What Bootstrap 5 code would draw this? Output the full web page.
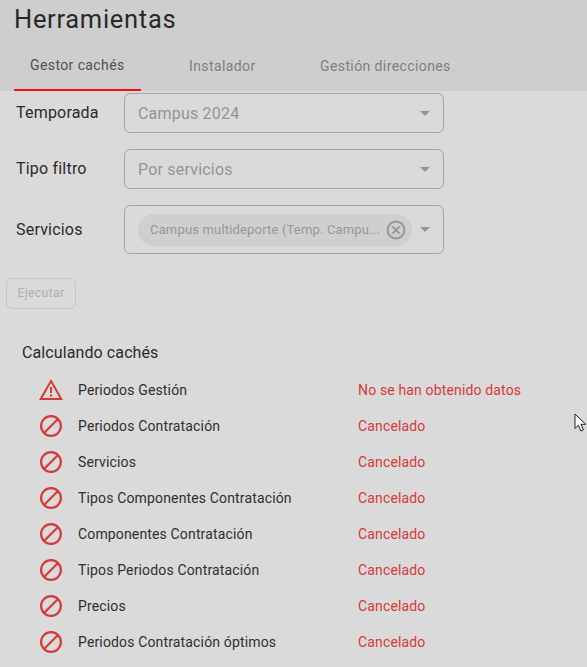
<!DOCTYPE html>
<html lang="es">
<head>
<meta charset="utf-8">
<title>Herramientas</title>
<link href="https://cdn.jsdelivr.net/npm/bootstrap@5.3.0/dist/css/bootstrap.min.css" rel="stylesheet">
<style>
html,body{height:100%;}
body{background:#dadada;font-family:Roboto,"Liberation Sans",sans-serif;color:#212121;overflow:hidden;position:relative;}
.hdr{background:#cecece;height:91px;}
.hdr-title{font-size:25.5px;font-weight:400;line-height:30px;letter-spacing:.7px;padding:4px 0 0 14px;margin:0;height:48px;color:#292929;}
.tabbar{height:43px;padding-left:14px;}
.tabitem{flex:none;white-space:nowrap;font-size:14px;letter-spacing:.4px;color:#7f7f7f;line-height:16px;height:43px;padding:10px 0 0 48px;}
.tabitem.on{color:#505050;border-bottom:2px solid #f01010;width:127px;padding:9px 0 0 16px;}
.tab2{width:131px;}
.formarea{padding:2px 0 0 16px;}
.frow{width:428px;}
.flabel{width:108px;font-size:16px;color:#2b2b2b;letter-spacing:.2px;}
.fbox{width:320px;height:40px;border:1px solid #a5a5a5;border-radius:6px;padding:1px 13px 0;color:#949494;font-size:16px;letter-spacing:.2px;}
.fbox.tall{height:49px;padding:0 13px;}
.caret{width:0;height:0;border-left:5px solid transparent;border-right:5px solid transparent;border-top:5px solid #969696;}
.chip{width:274px;height:32px;background:#cfcfcf;border-radius:16px;padding:0 6px 0 12px;font-size:13px;color:#979797;letter-spacing:.17px;}
.chip span{white-space:nowrap;}
.runbtn{margin:24px 0 0 6px;width:70px;height:31px;border:1px solid #c6c6c6;border-radius:6px;background:transparent;font-size:12px;letter-spacing:.45px;color:#afafaf;padding:0 0 2px 0;}
.calc-title{margin:34px 0 0 22px;font-size:16px;line-height:20px;color:#2b2b2b;font-weight:400;letter-spacing:.1px;}
.calc-list{margin-top:9px;padding-left:39px;list-style:none;}
.calc-list li{height:36px;font-size:14px;color:#2f2f2f;letter-spacing:.15px;}
.ico{width:24px;flex:none;margin-right:15px;}
.cname{width:280px;}
.cstat{color:#d83838;}
.mouse{position:absolute;left:574px;top:413px;}
</style>
</head>
<body>
<header class="hdr">
  <h1 class="hdr-title">Herramientas</h1>
  <nav class="tabbar d-flex">
    <div class="tabitem on">Gestor cachés</div>
    <div class="tabitem tab2">Instalador</div>
    <div class="tabitem tab3">Gestión direcciones</div>
  </nav>
</header>
<main>
  <div class="formarea d-flex flex-column gap-3">
    <div class="frow d-flex align-items-center">
      <label class="flabel">Temporada</label>
      <div class="fbox d-flex align-items-center justify-content-between"><span>Campus 2024</span><i class="caret"></i></div>
    </div>
    <div class="frow d-flex align-items-center">
      <label class="flabel">Tipo filtro</label>
      <div class="fbox d-flex align-items-center justify-content-between"><span>Por servicios</span><i class="caret"></i></div>
    </div>
    <div class="frow d-flex align-items-center">
      <label class="flabel">Servicios</label>
      <div class="fbox tall d-flex align-items-center justify-content-between">
        <div class="chip d-flex align-items-center justify-content-between"><span>Campus multideporte (Temp. Campu...</span>
          <svg width="20" height="20" viewBox="0 0 20 20" fill="none" stroke="#979797" stroke-width="2"><circle cx="10" cy="10" r="8.4"/><path d="M6.4 6.4l7.2 7.2M13.6 6.4l-7.2 7.2"/></svg>
        </div>
        <i class="caret"></i>
      </div>
    </div>
  </div>
  <button class="runbtn d-block" disabled>Ejecutar</button>
  <h2 class="calc-title">Calculando cachés</h2>
  <ul class="calc-list mb-0">
    <li class="d-flex align-items-center">
      <span class="ico d-flex"><svg width="24" height="22" viewBox="0 0 24 22" fill="none" stroke="#d83838" stroke-width="2"><path d="M12 2L1.7 20h20.6z" stroke-linejoin="miter"/><path d="M12 8v6M12 15.5v2.2"/></svg></span>
      <span class="cname">Periodos Gestión</span><span class="cstat">No se han obtenido datos</span>
    </li>
    <li class="d-flex align-items-center"><span class="ico d-flex"><svg width="24" height="24" viewBox="0 0 24 24" fill="none" stroke="#d83838" stroke-width="2.2"><circle cx="12" cy="12" r="9.9"/><path d="M5 19L19 5"/></svg></span><span class="cname">Periodos Contratación</span><span class="cstat">Cancelado</span></li>
    <li class="d-flex align-items-center"><span class="ico d-flex"><svg width="24" height="24" viewBox="0 0 24 24" fill="none" stroke="#d83838" stroke-width="2.2"><circle cx="12" cy="12" r="9.9"/><path d="M5 19L19 5"/></svg></span><span class="cname">Servicios</span><span class="cstat">Cancelado</span></li>
    <li class="d-flex align-items-center"><span class="ico d-flex"><svg width="24" height="24" viewBox="0 0 24 24" fill="none" stroke="#d83838" stroke-width="2.2"><circle cx="12" cy="12" r="9.9"/><path d="M5 19L19 5"/></svg></span><span class="cname">Tipos Componentes Contratación</span><span class="cstat">Cancelado</span></li>
    <li class="d-flex align-items-center"><span class="ico d-flex"><svg width="24" height="24" viewBox="0 0 24 24" fill="none" stroke="#d83838" stroke-width="2.2"><circle cx="12" cy="12" r="9.9"/><path d="M5 19L19 5"/></svg></span><span class="cname">Componentes Contratación</span><span class="cstat">Cancelado</span></li>
    <li class="d-flex align-items-center"><span class="ico d-flex"><svg width="24" height="24" viewBox="0 0 24 24" fill="none" stroke="#d83838" stroke-width="2.2"><circle cx="12" cy="12" r="9.9"/><path d="M5 19L19 5"/></svg></span><span class="cname">Tipos Periodos Contratación</span><span class="cstat">Cancelado</span></li>
    <li class="d-flex align-items-center"><span class="ico d-flex"><svg width="24" height="24" viewBox="0 0 24 24" fill="none" stroke="#d83838" stroke-width="2.2"><circle cx="12" cy="12" r="9.9"/><path d="M5 19L19 5"/></svg></span><span class="cname">Precios</span><span class="cstat">Cancelado</span></li>
    <li class="d-flex align-items-center"><span class="ico d-flex"><svg width="24" height="24" viewBox="0 0 24 24" fill="none" stroke="#d83838" stroke-width="2.2"><circle cx="12" cy="12" r="9.9"/><path d="M5 19L19 5"/></svg></span><span class="cname">Periodos Contratación óptimos</span><span class="cstat">Cancelado</span></li>
  </ul>
</main>
<svg class="mouse" width="14" height="20" viewBox="0 0 14 20"><path d="M1 1v14.5l3.4-3.2 2.4 5.7 2.6-1.1-2.4-5.6h4.7z" fill="#fff" stroke="#222" stroke-width="1"/></svg>
<script src="https://cdn.jsdelivr.net/npm/bootstrap@5.3.0/dist/js/bootstrap.bundle.min.js"></script>
</body>
</html>
